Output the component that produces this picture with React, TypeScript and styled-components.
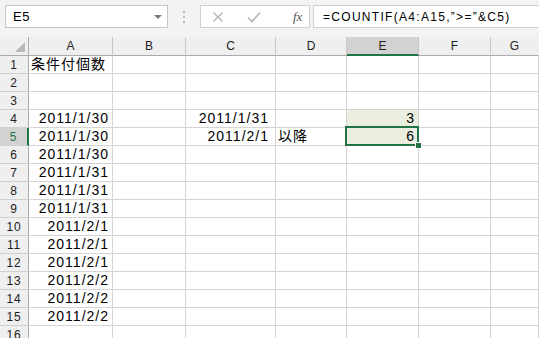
import React from "react";
import styled, { createGlobalStyle, css } from "styled-components";

const GREEN = "#217346";
const GRID = "#d4d4d4";

const Global = createGlobalStyle`
  html, body { margin: 0; padding: 0; background: #ffffff; overflow: hidden; }
  body { font-family: "Liberation Sans", "Noto Sans CJK JP", sans-serif; color: #000; }
`;

const Page = styled.div`
  width: 539px;
  height: 338px;
  overflow: hidden;
  display: flex;
  flex-direction: column;
`;

const Toolbar = styled.div`
  height: 37px;
  flex: none;
  display: flex;
  align-items: flex-start;
  padding: 5px 0 0 5px;
  box-sizing: border-box;
  background: #f3f3f3;
`;

const NameBox = styled.div`
  width: 163px;
  height: 23px;
  box-sizing: border-box;
  background: #fff;
  border: 1px solid #c6c6c6;
  display: flex;
  align-items: center;
  justify-content: space-between;
  padding: 0 5px 0 7px;
  font-size: 13px;
  letter-spacing: 0.5px;
`;

const Caret = styled.span`
  width: 0;
  height: 0;
  border-left: 4px solid transparent;
  border-right: 4px solid transparent;
  border-top: 4px solid #7a7a7a;
`;

const Grip = styled.div`
  width: 32px;
  height: 23px;
  display: flex;
  flex-direction: column;
  align-items: center;
  justify-content: center;
  gap: 3px;
`;

const Dot = styled.span`
  width: 2px;
  height: 2px;
  background: #b8b8b8;
`;

const ButtonBox = styled.div`
  width: 110px;
  height: 23px;
  box-sizing: border-box;
  background: #fff;
  border: 1px solid #d0d0d0;
  display: flex;
  align-items: center;
  padding-left: 11px;
  gap: 23px;
`;

const Fx = styled.span`
  font-family: "Liberation Serif", serif;
  font-style: italic;
  font-size: 13px;
  color: #555;
  margin-left: 9px;
`;

const FormulaInput = styled.div`
  flex: 1;
  height: 23px;
  margin-left: 3px;
  margin-right: -4px;
  box-sizing: border-box;
  background: #fff;
  border: 1px solid #d0d0d0;
  display: flex;
  align-items: center;
  padding-left: 9px;
  font-size: 12px;
  letter-spacing: 1.3px;
  white-space: nowrap;
`;

const Sheet = styled.div`
  display: grid;
  grid-template-columns: 29px 84px 73px 90px 71px 72px 72px 1fr;
  grid-auto-rows: 18px;
  grid-template-rows: 19px;
`;

const ColHead = styled.div<{ $sel?: boolean; $last?: boolean }>`
  box-sizing: border-box;
  background: ${(p) => (p.$sel ? "#d2d2d2" : "#efefef")};
  border-bottom: ${(p) => (p.$sel ? `2px solid ${GREEN}` : "1px solid #ababab")};
  border-right: 1px solid ${(p) => (p.$last ? "transparent" : "#c8c8c8")};
  display: flex;
  align-items: center;
  justify-content: center;
  font-size: 12px;
  color: #222;
  padding-top: ${(p) => (p.$sel ? "1px" : "0")};
`;

const Corner = styled.div`
  position: relative;
  box-sizing: border-box;
  background: #efefef;
  border-bottom: 1px solid #ababab;
  border-right: 1px solid #ababab;
`;

const CornerTri = styled.span`
  position: absolute;
  right: 3px;
  bottom: 3px;
  width: 0;
  height: 0;
  border-left: 10px solid transparent;
  border-bottom: 10px solid #b9b9b9;
`;

const RowHead = styled.div<{ $sel?: boolean }>`
  box-sizing: border-box;
  background: ${(p) => (p.$sel ? "#d2d2d2" : "#efefef")};
  border-bottom: 1px solid #d0d0d0;
  border-right: ${(p) => (p.$sel ? `2px solid ${GREEN}` : "1px solid #ababab")};
  display: flex;
  align-items: center;
  justify-content: center;
  font-size: 12px;
  letter-spacing: 0.8px;
  color: ${(p) => (p.$sel ? GREEN : "#222")};
  padding-top: 1px;
`;

const Cell = styled.div<{ $right?: boolean; $fill?: boolean; $active?: boolean; $pad?: number }>`
  position: relative;
  box-sizing: border-box;
  border-bottom: 1px solid ${GRID};
  border-right: 1px solid ${GRID};
  background: ${(p) => (p.$fill ? "#e9eedf" : "#fff")};
  display: flex;
  align-items: flex-end;
  justify-content: ${(p) => (p.$right ? "flex-end" : "flex-start")};
  padding: 0 ${(p) => (p.$right ? p.$pad ?? 4 : 0)}px 1px ${(p) => (p.$right ? 0 : p.$pad ?? 2)}px;
  font-size: 14px;
  line-height: 15px;
  letter-spacing: 1px;
  white-space: nowrap;
  ${(p) =>
    p.$active &&
    css`
      &::after {
        content: "";
        position: absolute;
        left: -2px;
        top: -2px;
        right: -1px;
        bottom: -1px;
        border: 2px solid ${GREEN};
        pointer-events: none;
      }
    `}
`;

const Handle = styled.span`
  position: absolute;
  right: -4px;
  bottom: -4px;
  width: 5px;
  height: 5px;
  background: ${GREEN};
  border: 1px solid #fff;
  z-index: 2;
`;

type CellData = { t?: string; right?: boolean; pad?: number; fill?: boolean; active?: boolean };

const cols = ["A", "B", "C", "D", "E", "F", "G"];

const dataA: Record<number, CellData> = {
  1: { t: "条件付個数" },
  4: { t: "2011/1/30", right: true, pad: 3 },
  5: { t: "2011/1/30", right: true, pad: 3 },
  6: { t: "2011/1/30", right: true, pad: 3 },
  7: { t: "2011/1/31", right: true, pad: 3 },
  8: { t: "2011/1/31", right: true, pad: 3 },
  9: { t: "2011/1/31", right: true, pad: 3 },
  10: { t: "2011/2/1", right: true, pad: 3 },
  11: { t: "2011/2/1", right: true, pad: 3 },
  12: { t: "2011/2/1", right: true, pad: 3 },
  13: { t: "2011/2/2", right: true, pad: 3 },
  14: { t: "2011/2/2", right: true, pad: 3 },
  15: { t: "2011/2/2", right: true, pad: 3 },
};

function cellFor(row: number, col: string): CellData {
  if (col === "A") return dataA[row] ?? {};
  if (col === "C" && row === 4) return { t: "2011/1/31", right: true, pad: 6 };
  if (col === "C" && row === 5) return { t: "2011/2/1", right: true, pad: 6 };
  if (col === "D" && row === 5) return { t: "以降", pad: 2 };
  if (col === "E" && row === 4) return { t: "3", right: true, pad: 3, fill: true };
  if (col === "E" && row === 5) return { t: "6", right: true, pad: 3, fill: true, active: true };
  return {};
}

const rows = Array.from({ length: 16 }, (_, i) => i + 1);

export default function App() {
  return (
    <Page>
      <Global />
      <Toolbar>
        <NameBox>
          <span>E5</span>
          <Caret />
        </NameBox>
        <Grip>
          <Dot />
          <Dot />
          <Dot />
        </Grip>
        <ButtonBox>
          <svg width="12" height="12" viewBox="0 0 12 12">
            <path d="M1.5 1.5 L10.5 10.5 M10.5 1.5 L1.5 10.5" stroke="#b4b4b4" strokeWidth="1.4" fill="none" />
          </svg>
          <svg width="14" height="12" viewBox="0 0 14 12">
            <path d="M1 6.5 L5 10.5 L13 1.5" stroke="#b4b4b4" strokeWidth="1.6" fill="none" />
          </svg>
          <Fx>fx</Fx>
        </ButtonBox>
        <FormulaInput>=COUNTIF(A4:A15,”&gt;=”&amp;C5)</FormulaInput>
      </Toolbar>
      <Sheet>
        <Corner>
          <CornerTri />
        </Corner>
        {cols.map((c, i) => (
          <ColHead key={c} $sel={c === "E"} $last={i === cols.length - 1}>
            {c}
          </ColHead>
        ))}
        {rows.map((r) => (
          <React.Fragment key={r}>
            <RowHead $sel={r === 5}>{r}</RowHead>
            {cols.map((c) => {
              const d = cellFor(r, c);
              return (
                <Cell key={c} $right={d.right} $pad={d.pad} $fill={d.fill} $active={d.active}>
                  {d.t}
                  {d.active && <Handle />}
                </Cell>
              );
            })}
          </React.Fragment>
        ))}
      </Sheet>
    </Page>
  );
}
